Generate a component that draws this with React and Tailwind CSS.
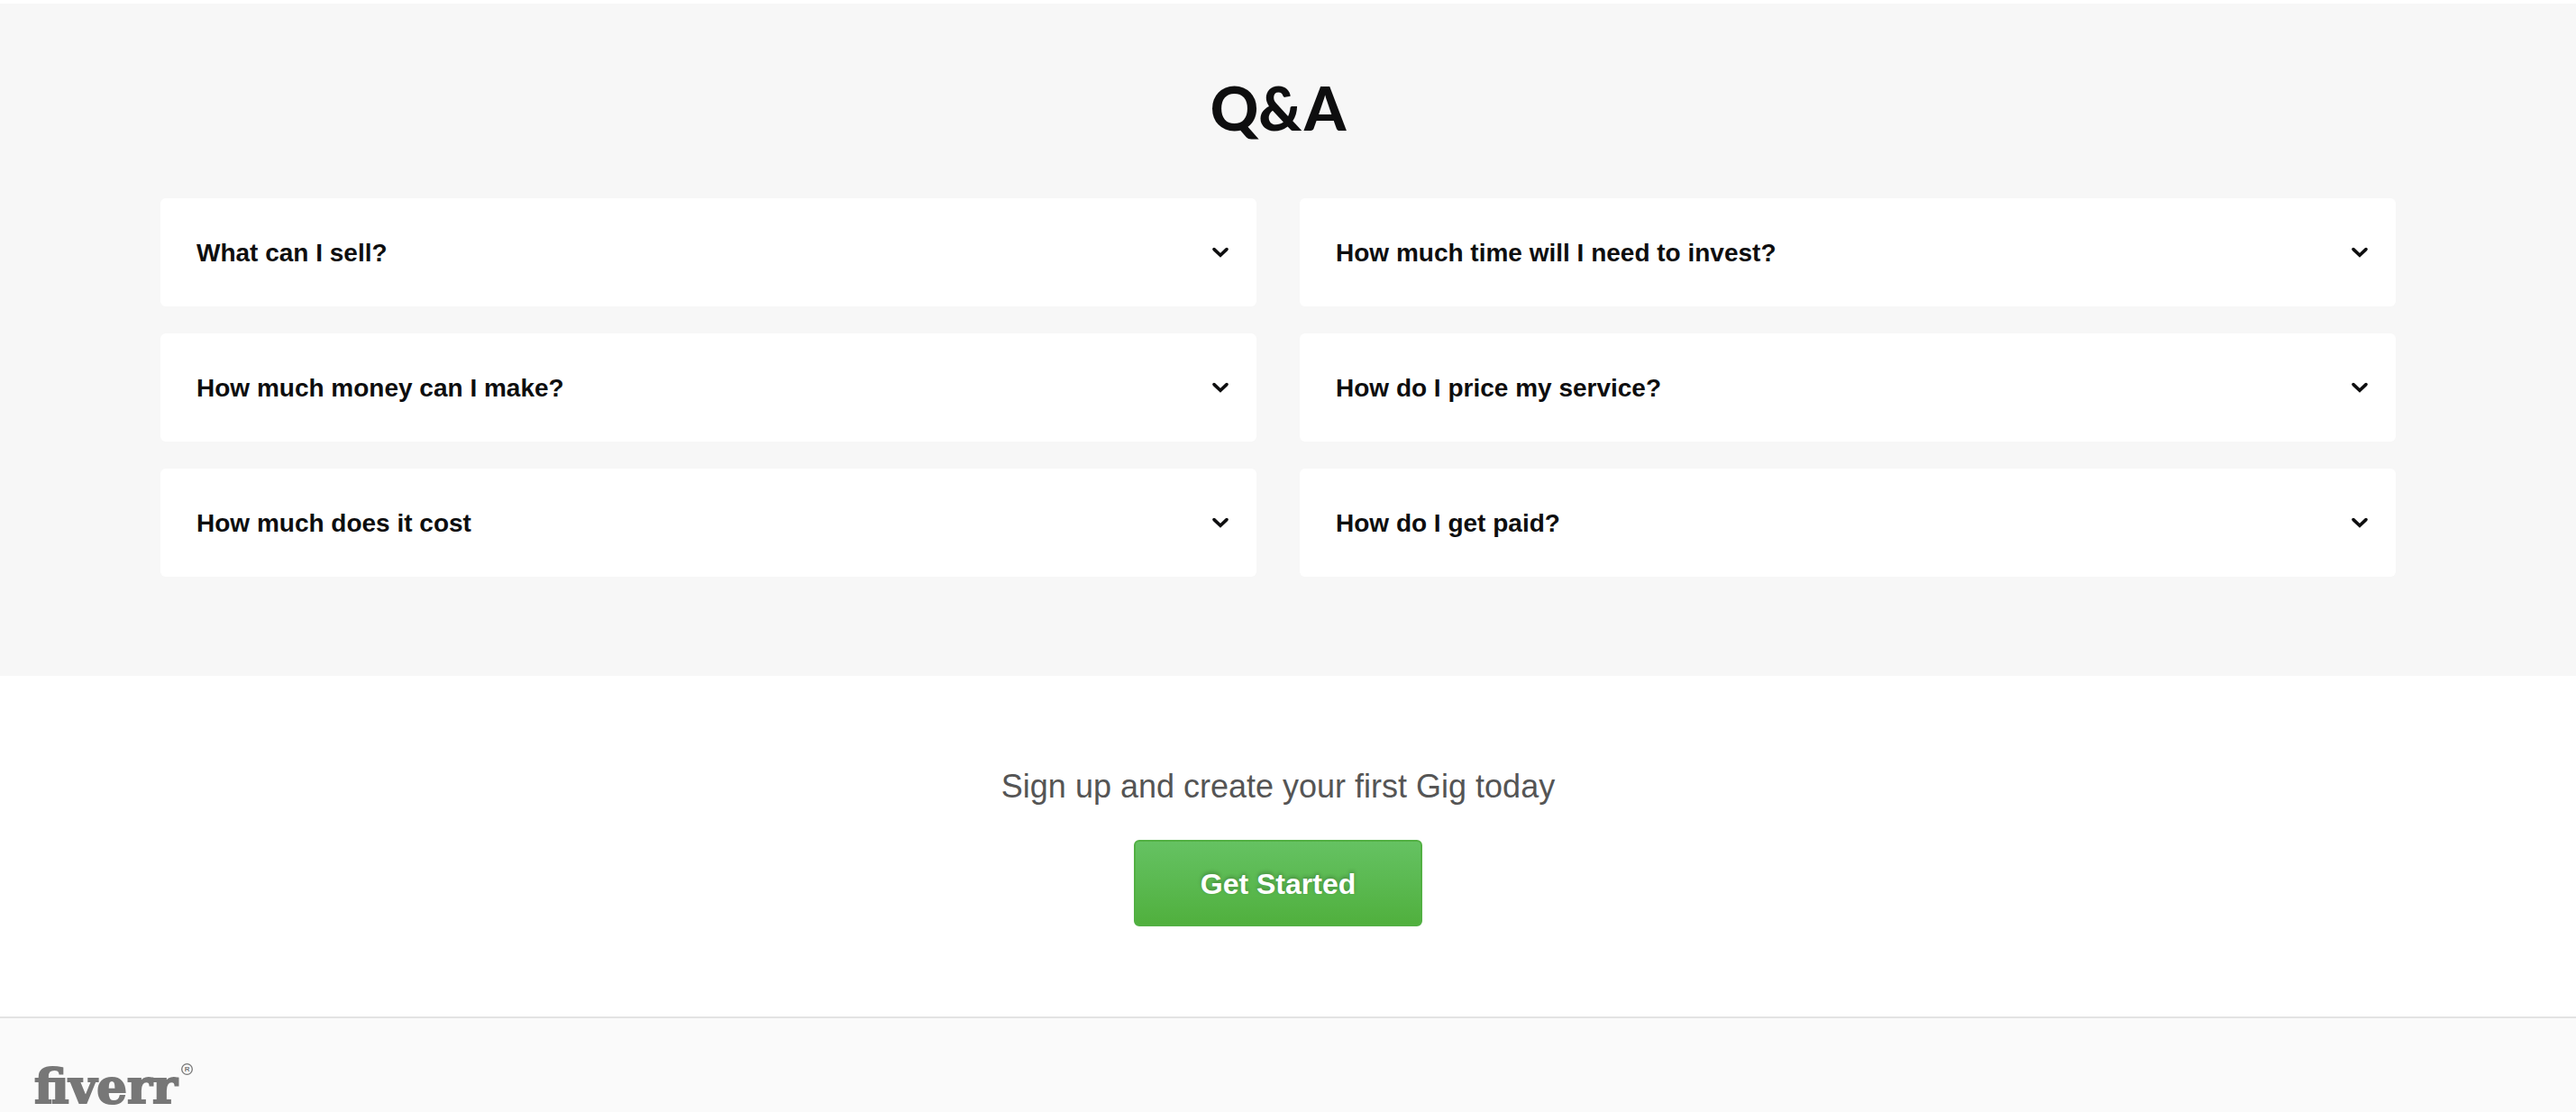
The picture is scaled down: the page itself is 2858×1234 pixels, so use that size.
import React from "react";

const QUESTIONS = [
  "What can I sell?",
  "How much time will I need to invest?",
  "How much money can I make?",
  "How do I price my service?",
  "How much does it cost",
  "How do I get paid?",
];

function Chevron() {
  return (
    <svg viewBox="0 0 20 14" className="h-[14px] w-5 shrink-0" fill="none" aria-hidden="true">
      <path d="M3 3.6 L10 10.2 L17 3.6" stroke="#0e0e0f" strokeWidth="3.6" strokeLinecap="round" />
    </svg>
  );
}

export default function App() {
  return (
    <div className="flex min-h-screen flex-col bg-white font-['Liberation_Sans',sans-serif]">
      <section className="mt-1 bg-[#f7f7f7] pr-[22px] pb-[110px] pt-[76px]">
        <h2 className="text-center font-['Lato',sans-serif] text-[66px] leading-[80px] font-black text-[#0e0e0f]">
          Q&amp;A
        </h2>
        <div className="mx-auto mt-[60px] grid max-w-[2480px] grid-cols-2 gap-x-12 gap-y-[30px]">
          {QUESTIONS.map((q) => (
            <button
              key={q}
              type="button"
              aria-expanded="false"
              className="flex h-[120px] items-center justify-between rounded-md bg-white pr-[30px] pl-10 text-left text-[28px] font-bold text-[#0e0e0f]"
            >
              <span className="pt-0.5">{q}</span>
              <Chevron />
            </button>
          ))}
        </div>
      </section>

      <section className="flex flex-col items-center pt-[101px] pr-[22px] pb-[100px]">
        <p className="text-[36px] leading-[44px] text-[#555555]">Sign up and create your first Gig today</p>
        <button
          type="button"
          className="mt-[37px] h-24 w-80 rounded-md border-2 border-[#52b043] bg-linear-to-b from-[#65c262] to-[#50b03d] pt-0.5 text-[32px] font-bold text-white [text-shadow:0_-2px_4px_rgba(0,0,0,0.25)]"
        >
          Get Started
        </button>
      </section>

      <footer className="flex-1 border-t-2 border-[#e3e3e3] bg-[#fafafa] pt-[43px] pl-[38px]">
        <a
          href="#home"
          aria-label="fiverr"
          className="inline-flex items-start gap-1 font-['DejaVu_Serif',serif] text-[53px] leading-[64px] font-bold text-[#777777]"
        >
          <span className="[-webkit-text-stroke:2px_#777777]">fiverr</span>
          <svg viewBox="0 0 13 13" className="mt-[7px] size-[13px]" aria-hidden="true">
            <circle cx="6.5" cy="6.5" r="5.8" fill="none" stroke="#777777" strokeWidth="1.3" />
            <text x="6.6" y="9.4" textAnchor="middle" fill="#777777" fontSize="8" fontWeight="700" fontFamily="Liberation Sans, sans-serif">
              R
            </text>
          </svg>
        </a>
      </footer>
    </div>
  );
}
